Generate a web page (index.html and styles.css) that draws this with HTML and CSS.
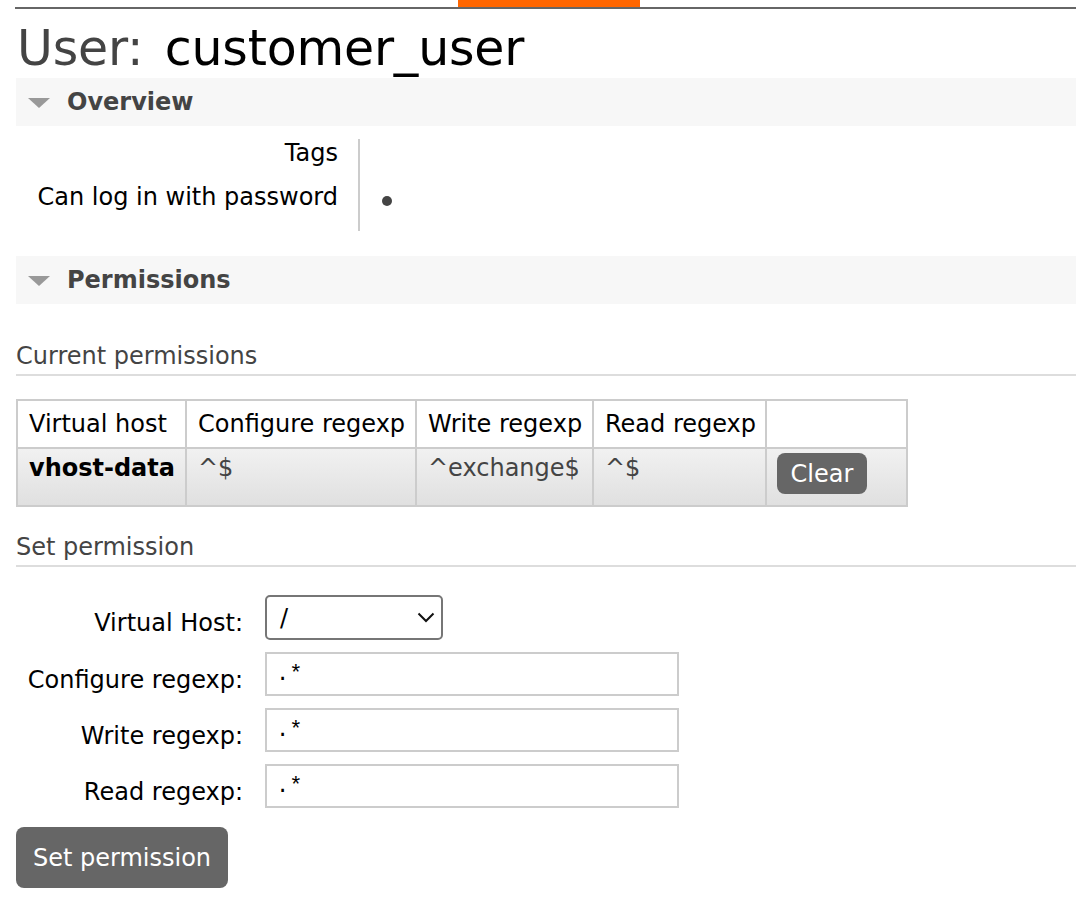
FILE: index.html
```html
<!DOCTYPE html>
<html>
<head>
<meta charset="utf-8">
<link rel="stylesheet" href="styles.css">
</head>
<body>
<div class="topbar"><div class="tab-active"></div></div>
<h1 class="title"><span class="title-label">User:</span> <b class="title-name">customer_user</b></h1>

<div class="section">
  <h2 class="section-head"><span class="tri"></span>Overview</h2>
  <div class="overview">
    <div class="ov-labels">
      <div class="ov-label">Tags</div>
      <div class="ov-label">Can log in with password</div>
    </div>
    <div class="ov-values">
      <div class="ov-value"></div>
      <div class="ov-value"><span class="dot"></span></div>
    </div>
  </div>
</div>

<div class="section">
  <h2 class="section-head"><span class="tri"></span>Permissions</h2>
  <h3 class="sub-head">Current permissions</h3>
  <table class="perm-table">
    <colgroup>
      <col class="c1"><col class="c2"><col class="c3"><col class="c4"><col class="c5">
    </colgroup>
    <thead>
      <tr>
        <th>Virtual host</th>
        <th>Configure regexp</th>
        <th>Write regexp</th>
        <th>Read regexp</th>
        <th></th>
      </tr>
    </thead>
    <tbody>
      <tr>
        <td class="vhost">vhost-data</td>
        <td>^$</td>
        <td>^exchange$</td>
        <td>^$</td>
        <td class="btn-cell"><button class="btn btn-small">Clear</button></td>
      </tr>
    </tbody>
  </table>

  <h3 class="sub-head sub-head-2">Set permission</h3>
  <form class="perm-form">
    <div class="form-row">
      <label class="form-label">Virtual Host:</label>
      <div class="select"><span>/</span>
        <svg class="chev" width="18" height="11" viewBox="0 0 18 11"><path d="M1.5 1.5 L9 9 L16.5 1.5" fill="none" stroke="#111" stroke-width="2"/></svg>
      </div>
    </div>
    <div class="form-row">
      <label class="form-label">Configure regexp:</label>
      <input class="text-input" type="text" value=".*">
    </div>
    <div class="form-row">
      <label class="form-label">Write regexp:</label>
      <input class="text-input" type="text" value=".*">
    </div>
    <div class="form-row">
      <label class="form-label">Read regexp:</label>
      <input class="text-input" type="text" value=".*">
    </div>
    <button type="button" class="btn btn-big">Set permission</button>
  </form>
</div>
</body>
</html>
```
FILE: styles.css
```css
html, body {
  margin: 0;
  padding: 0;
  background: #fff;
}
body {
  font-family: "DejaVu Sans", Verdana, sans-serif;
  font-size: 24px;
  color: #000;
  padding-left: 16px;
}
.topbar {
  height: 7px;
  border-bottom: 2px solid #666;
  margin-left: -1px;
  position: relative;
}
.tab-active {
  position: absolute;
  left: 443px;
  top: 0;
  width: 182px;
  height: 7px;
  background: #f60;
}
.title {
  margin: 0;
  font-weight: normal;
  font-size: 49px;
  line-height: 58px;
  height: 58px;
  padding-top: 11px;
  padding-left: 1px;
  letter-spacing: -0.2px;
  word-spacing: 6px;
}
.title-label { color: #444; }
.title-name { font-weight: normal; color: #000; }

.section-head {
  margin: 0;
  height: 48px;
  background: #f7f7f7;
  display: flex;
  align-items: center;
  font-size: 24px;
  font-weight: bold;
  color: #444;
}
.tri {
  display: inline-block;
  width: 0;
  height: 0;
  border-left: 11px solid transparent;
  border-right: 11px solid transparent;
  border-top: 10px solid #999;
  margin-left: 12px;
  margin-right: 17px;
  margin-top: 2px;
}
.overview {
  display: flex;
  padding-top: 13px;
  padding-bottom: 25px;
}
.ov-labels {
  width: 322px;
  text-align: right;
  padding-right: 20px;
  padding-bottom: 4px;
  border-right: 2px solid #ccc;
}
.ov-label {
  height: 44px;
  line-height: 28px;
}
.ov-value { height: 44px; }
.dot {
  display: inline-block;
  width: 10px;
  height: 10px;
  border-radius: 50%;
  background: #444;
  margin-left: 22px;
  margin-top: 13px;
}
.sub-head {
  margin: 38px 0 24px;
  font-size: 24px;
  font-weight: normal;
  color: #444;
  line-height: 29px;
  padding-bottom: 3px;
  border-bottom: 2px solid #ddd;
}
.perm-table {
  border-collapse: collapse;
  border: 2px solid #ccc;
  table-layout: fixed;
  width: 890px;
  margin-top: -1px;
}
.c1 { width: 169px; }
.c2 { width: 230px; }
.c3 { width: 177px; }
.c4 { width: 173px; }
.c5 { width: 141px; }
.perm-table th, .perm-table td {
  border: 2px solid #ccc;
  text-align: left;
  vertical-align: top;
  padding: 9px 10px 0 11px;
  font-weight: normal;
  white-space: nowrap;
}
.perm-table th {
  height: 37px;
  background: #fff;
}
.perm-table td {
  height: 51px;
  background: linear-gradient(#f1f1f1, #e0e0e0);
  color: #444;
  padding-top: 5px;
}
.perm-table td.vhost { color: #000; font-weight: bold; }
.perm-table td.btn-cell { padding: 4px 10px 0; }
.btn {
  background: #666;
  color: #fff;
  border: none;
  border-radius: 8px;
  font-family: "DejaVu Sans", Verdana, sans-serif;
  cursor: pointer;
}
.btn-small {
  font-size: 24px;
  width: 90px;
  height: 41px;
  padding: 0;
}
.sub-head-2 { margin-top: 26px; }
.perm-form {
  padding-top: 4px;
}
.form-row {
  display: flex;
  align-items: flex-start;
  margin-bottom: 12px;
}
.form-label {
  width: 227px;
  text-align: right;
  margin-right: 22px;
  line-height: 28px;
  padding-top: 14px;
}
.select {
  box-sizing: border-box;
  width: 178px;
  height: 45px;
  border: 2px solid #767676;
  border-radius: 5px;
  display: flex;
  align-items: center;
  justify-content: space-between;
  padding: 0 6px 0 13px;
  font-size: 24px;
}
.text-input {
  box-sizing: border-box;
  width: 414px;
  height: 44px;
  border: 2px solid #ccc;
  padding: 0 9px;
  font-family: "Liberation Mono", monospace;
  font-size: 22px;
  color: #000;
  margin: 0;
}
.btn-big {
  margin-top: 7px;
  font-size: 24px;
  width: 212px;
  height: 61px;
  padding: 0;
}
```
